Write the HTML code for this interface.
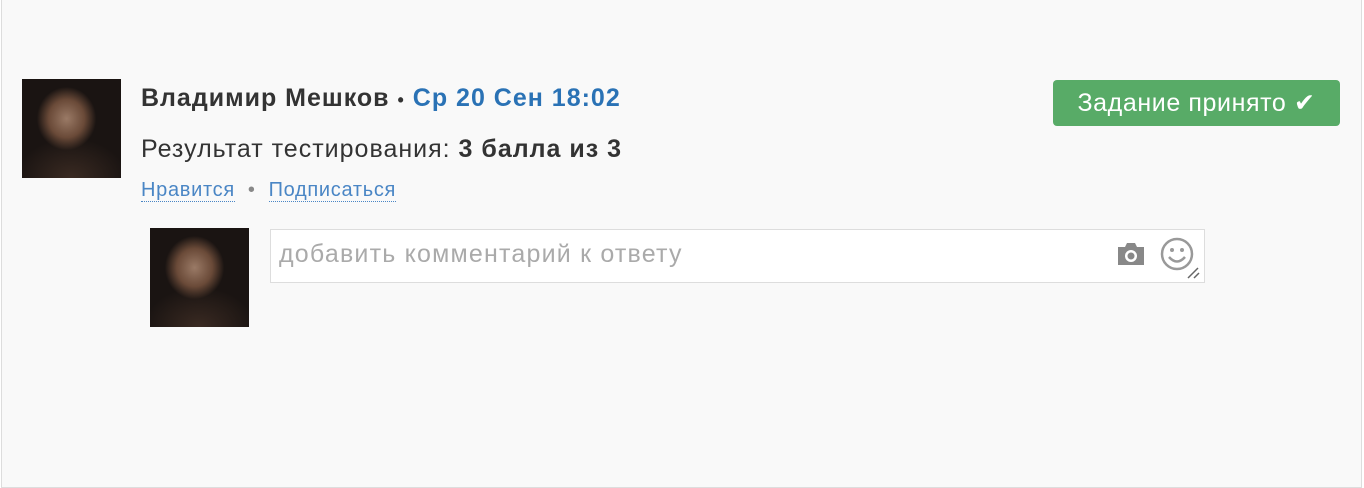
<!DOCTYPE html>
<html><head><meta charset="utf-8"><style>
body{margin:0;width:1364px;height:488px;background:#fff;font-family:"Liberation Sans",sans-serif;overflow:hidden}
.wrap{position:absolute;left:1px;top:-1px;width:1359px;height:487px;border:1px solid #ddd;background:#f9f9f9}
.av{position:absolute;width:99px;height:99px;background:radial-gradient(ellipse 30% 32% at 45% 40%,#9a7a66 0%,#6a4a38 60%,transparent 100%),radial-gradient(ellipse 70% 50% at 50% 100%,#3a2a22 0%,#1a1412 80%),#151515}
.t{position:absolute;white-space:nowrap;color:#333}
</style></head><body>
<div class="wrap"></div>
<div class="av" style="left:22px;top:79px"></div>
<div class="t" style="left:141px;top:84px;font-size:25px;letter-spacing:1px;font-weight:bold">Владимир Мешков <span style="font-size:18px">•</span> <span style="color:#2a72b5">Ср 20 Сен 18:02</span></div>
<div class="t" style="left:141px;top:135px;font-size:25px;letter-spacing:1px">Результат тестирования: <b>3 балла из 3</b></div>
<div class="t" style="left:141px;top:179px;font-size:20px;letter-spacing:0.7px;color:#4a86c5"><span style="border-bottom:1px dotted #4a86c5">Нравится</span><span style="color:#888;margin:0 13px">•</span><span style="border-bottom:1px dotted #4a86c5">Подписаться</span></div>
<div style="position:absolute;left:1053px;top:80px;width:287px;height:46px;background:#58ab67;border-radius:4px;color:#fff;font-size:25px;letter-spacing:0.6px;line-height:46px;text-align:center">Задание принято ✔</div>
<div class="av" style="left:150px;top:228px"></div>
<div style="position:absolute;left:270px;top:229px;width:933px;height:52px;border:1px solid #ddd;background:#fff"></div>
<div class="t" style="left:279px;top:240px;font-size:25px;letter-spacing:1.2px;color:#aaa">добавить комментарий к ответу</div>
<svg style="position:absolute;left:1115px;top:240px" width="32" height="28" viewBox="0 0 32 28"><path d="M3 7h7l2-4h8l2 4h7v18H3z" fill="#888"/><circle cx="16" cy="16" r="6" fill="#fff"/><circle cx="16" cy="16" r="3.5" fill="#888"/></svg>
<svg style="position:absolute;left:1158px;top:236px" width="46" height="46" viewBox="0 0 46 46"><circle cx="19" cy="18" r="15" fill="none" stroke="#999" stroke-width="2.5"/><circle cx="14" cy="14" r="2" fill="#999"/><circle cx="24" cy="14" r="2" fill="#999"/><path d="M11 21q8 9 16 0" fill="none" stroke="#999" stroke-width="2.5"/><path d="M30 42l10-10M36 42l5-5" stroke="#666" stroke-width="1.5"/></svg>
</body></html>
